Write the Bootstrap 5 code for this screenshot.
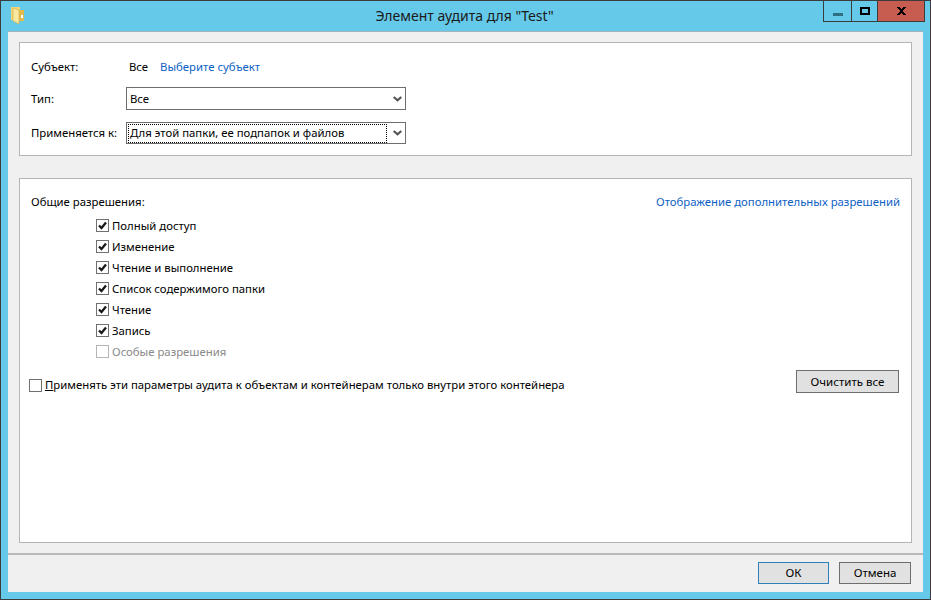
<!DOCTYPE html>
<html lang="ru"><head><meta charset="utf-8"><title>Элемент аудита</title>
<link href="https://cdn.jsdelivr.net/npm/bootstrap@5.3.0/dist/css/bootstrap.min.css" rel="stylesheet">
<style>
html,body{margin:0;height:100%;overflow:hidden}
body{font-family:"Noto Sans","Open Sans",sans-serif;font-size:11.35px;color:#000;line-height:16px;background:#65c9e9}
.win{width:931px;height:600px;border:1px solid #3c3c3c;background:#65c9e9;display:flex;flex-direction:column}
.tbar{height:30px;display:grid;grid-template-columns:1fr auto 1fr;flex:none}
.ticon{margin:6px 0 0 10px;display:block}
.ttl{font-size:14px;line-height:20px;padding-top:5px;color:#1a1a1a;padding-right:2px}
.ctrls{justify-self:end;height:21px;margin-right:5px;border:1px solid #3c3c3c;border-top:0;display:flex}
.cb{display:flex;align-items:center;justify-content:center;height:100%}
.cb1{width:28px;border-right:1px solid #3c3c3c;padding-top:6px}
.cb2{width:26px;border-right:1px solid #3c3c3c}
.cb3{width:46px;background:#c75c50}
.client{flex:1;margin:0 7px 7px 7px;background:#f0f0f0;border-top:1px solid #a3b4bb;display:flex;flex-direction:column}
.pane{background:#fff;border:1px solid #b5b5b5;margin:0 11px;position:relative}
.pane1{margin-top:10px;height:114px;padding:16px 11px 0 11px}
.pane2{margin-top:22px;height:365px;padding:15px 11px 0 11px}
.frow{display:flex;align-items:center}
.lab{width:95px;flex:none}
.val{margin-left:3px;margin-right:12px}
a.lnk{color:#0f62c4;text-decoration:none}
.sel{width:280px;height:23px;border:1px solid #6e6e6e;background:#fff;display:flex;align-items:center;padding:0 2px 0 3px;justify-content:space-between}
.sel2{height:22px}
.dot{outline:1px dotted #000;width:257px;height:17px;margin-left:-1px;padding-left:1px;line-height:16px;display:block}
.chk{display:flex;align-items:center;height:21px;gap:3px;margin-left:65px}
.cbx{width:13px;height:13px;border:1px solid #707070;background:#fff;flex:none;display:block}
.cbx svg{display:block}
.off{color:#8a8a8a}
.off .cbx{border-color:#b5b5b5}
.bline{display:flex;align-items:flex-start;justify-content:space-between;height:23px;margin-top:8px;margin-left:-2px}
.lbl2{display:flex;align-items:center;gap:3px;margin-top:7px}
.btn.wbtn{background:#e1e1e1;border:1px solid #6e6e6e;border-radius:0;color:#000;font-size:11.5px;line-height:16px;padding:0;height:23px;margin-right:1px}
.btn.wbtn.def{border:1px solid #2f7fb8}
.clr{width:103px}
.btn.wbtn.dlg{width:72px;height:22px;margin:0}
.btn.wbtn.dlg.def{width:71px}
.foot{flex:1;margin-top:10px;border-top:2px solid #b9b9b9;display:flex;justify-content:flex-end;gap:10px;padding:7px 12px 0 0}
.chev{margin-right:1px}
</style></head><body>
<div class="win">
 <div class="tbar">
  <div><svg class="ticon" width="13" height="17" viewBox="0 0 13 17"><path d="M0 0h9v13H0z" fill="#f0d678"/><path d="M8 3h5v11H8z" fill="#e2bb4d"/><path d="M2 1l6 2v14l-6-3z" fill="#f8e9a0" stroke="#d8b04a" stroke-width=".7"/><rect x="10" y="8" width="2" height="3" fill="#fff"/></svg></div>
  <div class="ttl text-center">Элемент аудита для "Test"</div>
  <div class="ctrls">
   <div class="cb cb1"><svg width="10" height="3"><rect width="10" height="3" fill="#2f6f86"/></svg></div>
   <div class="cb cb2"><svg width="10" height="8"><rect x="1" y="1" width="8" height="6" fill="none" stroke="#000" stroke-width="2"/></svg></div>
   <div class="cb cb3"><svg width="9" height="8" viewBox="0 0 9 8"><path d="M0 0h3v1h1v1h1V1h1V0h3v1H8v1H7v1H6v2h1v1h1v1h1v1H6V7H5V6H4v1H3v1H0V7h1V6h1V5h1V3H2V2H1V1H0z"/></svg></div>
  </div>
 </div>
 <div class="client">
  <div class="pane pane1">
   <div class="frow" style="height:16px"><span class="lab">Субъект:</span><span class="val">Все</span><a class="lnk" href="#">Выберите субъект</a></div>
   <div class="frow" style="margin-top:12px"><span class="lab">Тип:</span><div class="sel"><span>Все</span><svg class="chev" width="9" height="6" viewBox="0 0 9 6"><path d="M.7 1l3.8 3.3L8.3 1" fill="none" stroke="#555" stroke-width="2.2"/></svg></div></div>
   <div class="frow" style="margin-top:12px"><span class="lab">Применяется к:</span><div class="sel sel2"><span class="dot">Для этой папки, ее подпапок и файлов</span><svg class="chev" width="9" height="6" viewBox="0 0 9 6"><path d="M.7 1l3.8 3.3L8.3 1" fill="none" stroke="#555" stroke-width="2.2"/></svg></div></div>
  </div>
  <div class="pane pane2">
   <div class="d-flex justify-content-between" style="margin-bottom:5px"><span>Общие разрешения:</span><a class="lnk" href="#">Отображение дополнительных разрешений</a></div>
   <div class="chk"><span class="cbx"><svg width="11" height="11" viewBox="0 0 11 11"><path d="M2 5.5l2.5 2.5L9 2.5" fill="none" stroke="#1a1a1a" stroke-width="2.3"/></svg></span><span>Полный доступ</span></div>
   <div class="chk"><span class="cbx"><svg width="11" height="11" viewBox="0 0 11 11"><path d="M2 5.5l2.5 2.5L9 2.5" fill="none" stroke="#1a1a1a" stroke-width="2.3"/></svg></span><span>Изменение</span></div>
   <div class="chk"><span class="cbx"><svg width="11" height="11" viewBox="0 0 11 11"><path d="M2 5.5l2.5 2.5L9 2.5" fill="none" stroke="#1a1a1a" stroke-width="2.3"/></svg></span><span>Чтение и выполнение</span></div>
   <div class="chk"><span class="cbx"><svg width="11" height="11" viewBox="0 0 11 11"><path d="M2 5.5l2.5 2.5L9 2.5" fill="none" stroke="#1a1a1a" stroke-width="2.3"/></svg></span><span>Список содержимого папки</span></div>
   <div class="chk"><span class="cbx"><svg width="11" height="11" viewBox="0 0 11 11"><path d="M2 5.5l2.5 2.5L9 2.5" fill="none" stroke="#1a1a1a" stroke-width="2.3"/></svg></span><span>Чтение</span></div>
   <div class="chk"><span class="cbx"><svg width="11" height="11" viewBox="0 0 11 11"><path d="M2 5.5l2.5 2.5L9 2.5" fill="none" stroke="#1a1a1a" stroke-width="2.3"/></svg></span><span>Запись</span></div>
   <div class="chk off"><span class="cbx"></span><span>Особые разрешения</span></div>
   <div class="bline"><div class="lbl2"><span class="cbx"></span><span><u>П</u>рименять эти параметры аудита к объектам и контейнерам только внутри этого контейнера</span></div><button class="btn wbtn clr">Очистить все</button></div>
  </div>
  <div class="foot"><button class="btn wbtn def dlg">ОК</button><button class="btn wbtn dlg">Отмена</button></div>
 </div>
</div>
<script src="https://cdn.jsdelivr.net/npm/bootstrap@5.3.0/dist/js/bootstrap.bundle.min.js"></script>
</body></html>
